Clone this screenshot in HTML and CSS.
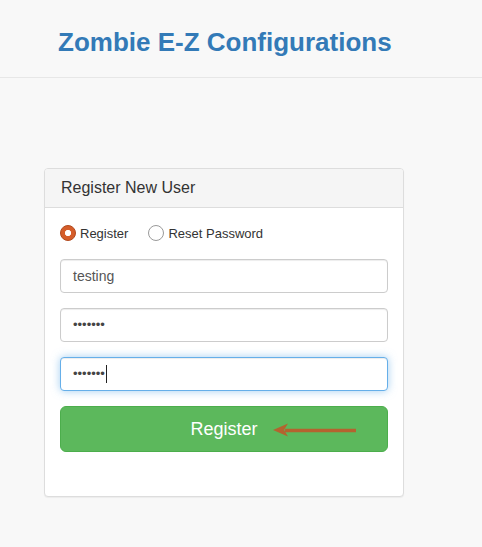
FILE: index.html
```html
<!DOCTYPE html>
<html lang="en">
<head>
<meta charset="utf-8">
<title>Zombie E-Z Configurations</title>
<link rel="stylesheet" href="styles.css">
</head>
<body>
<header class="site-header">
  <h1 class="brand">Zombie E-Z Configurations</h1>
</header>
<main class="main">
  <section class="panel">
    <div class="panel-heading">Register New User</div>
    <div class="panel-body">
      <div class="radio-row">
        <label class="radio"><span class="radio-dot checked"></span>Register</label>
        <label class="radio"><span class="radio-dot"></span>Reset Password</label>
      </div>
      <div class="form-control">testing</div>
      <div class="form-control password">•••••••</div>
      <div class="form-control password focused">•••••••<span class="caret"></span></div>
      <div class="btn-wrap">
        <button class="btn-register" type="button">Register</button>
        <svg class="arrow" width="90" height="16" viewBox="0 0 90 16" aria-hidden="true">
          <line x1="14" y1="7.5" x2="85" y2="7.5" stroke="#b4632f" stroke-width="3.5"/>
          <path d="M2 7 L17 0.5 L13 7 L17 13.5 Z" fill="#b4632f"/>
        </svg>
      </div>
    </div>
  </section>
</main>
</body>
</html>
```
FILE: styles.css
```css
html, body {
  margin: 0;
  padding: 0;
}
body {
  background: #f8f8f8;
  font-family: "Liberation Sans", Arial, sans-serif;
  color: #333;
  width: 482px;
  height: 547px;
  overflow: hidden;
}
.site-header {
  height: 77px;
  border-bottom: 1px solid #e7e7e7;
  box-sizing: content-box;
}
.brand {
  margin: 0;
  padding: 27px 0 0 58px;
  font-size: 26px;
  line-height: 30px;
  font-weight: bold;
  color: #337ab7;
}
.main {
  padding: 90px 0 0 44px;
}
.panel {
  width: 360px;
  box-sizing: border-box;
  background: #fff;
  border: 1px solid #ddd;
  border-radius: 4px;
  box-shadow: 0 1px 1px rgba(0,0,0,.05);
}
.panel-heading {
  background: #f5f5f5;
  border-bottom: 1px solid #ddd;
  border-radius: 3px 3px 0 0;
  padding: 10px 15px 10px 16px;
  font-size: 16px;
  line-height: 18px;
  color: #333;
}
.panel-body {
  padding: 15px 15px 44px 15px;
}
.radio-row {
  display: flex;
  gap: 20px;
  height: 20px;
  margin-bottom: 16px;
}
.radio {
  display: flex;
  align-items: center;
  gap: 4px;
  font-size: 13px;
  color: #333;
}
.radio-dot {
  width: 14px;
  height: 14px;
  border-radius: 50%;
  border: 1px solid #9a9a9a;
  background: #fff;
  box-sizing: content-box;
}
.radio-dot.checked {
  background: #d55d2a radial-gradient(circle, #fff 0 2.8px, transparent 3.4px);
  border-color: #b24a1f;
}
.form-control {
  height: 34px;
  box-sizing: border-box;
  border: 1px solid #ccc;
  border-radius: 4px;
  padding: 6px 12px;
  font-size: 14px;
  line-height: 20px;
  color: #555;
  background: #fff;
  box-shadow: inset 0 1px 1px rgba(0,0,0,.075);
  margin-bottom: 15px;
  display: flex;
  align-items: center;
}
.form-control.password {
  color: #444;
  font-size: 13px;
}
.form-control.focused {
  border-color: #66afe9;
  box-shadow: inset 0 1px 1px rgba(0,0,0,.075), 0 0 8px rgba(102,175,233,.6);
}
.caret {
  display: inline-block;
  width: 1px;
  height: 18px;
  background: #222;
  margin-left: 1px;
}
.btn-wrap {
  position: relative;
  margin-top: 15px;
}
.btn-register {
  display: block;
  width: 100%;
  height: 46px;
  box-sizing: border-box;
  background: #5cb85c;
  border: 1px solid #4cae4c;
  border-radius: 6px;
  color: #fff;
  font-family: "Liberation Sans", Arial, sans-serif;
  font-size: 18px;
  line-height: 24px;
  padding: 10px 16px;
  cursor: pointer;
}
.arrow {
  position: absolute;
  left: 211px;
  top: 17px;
}
```
